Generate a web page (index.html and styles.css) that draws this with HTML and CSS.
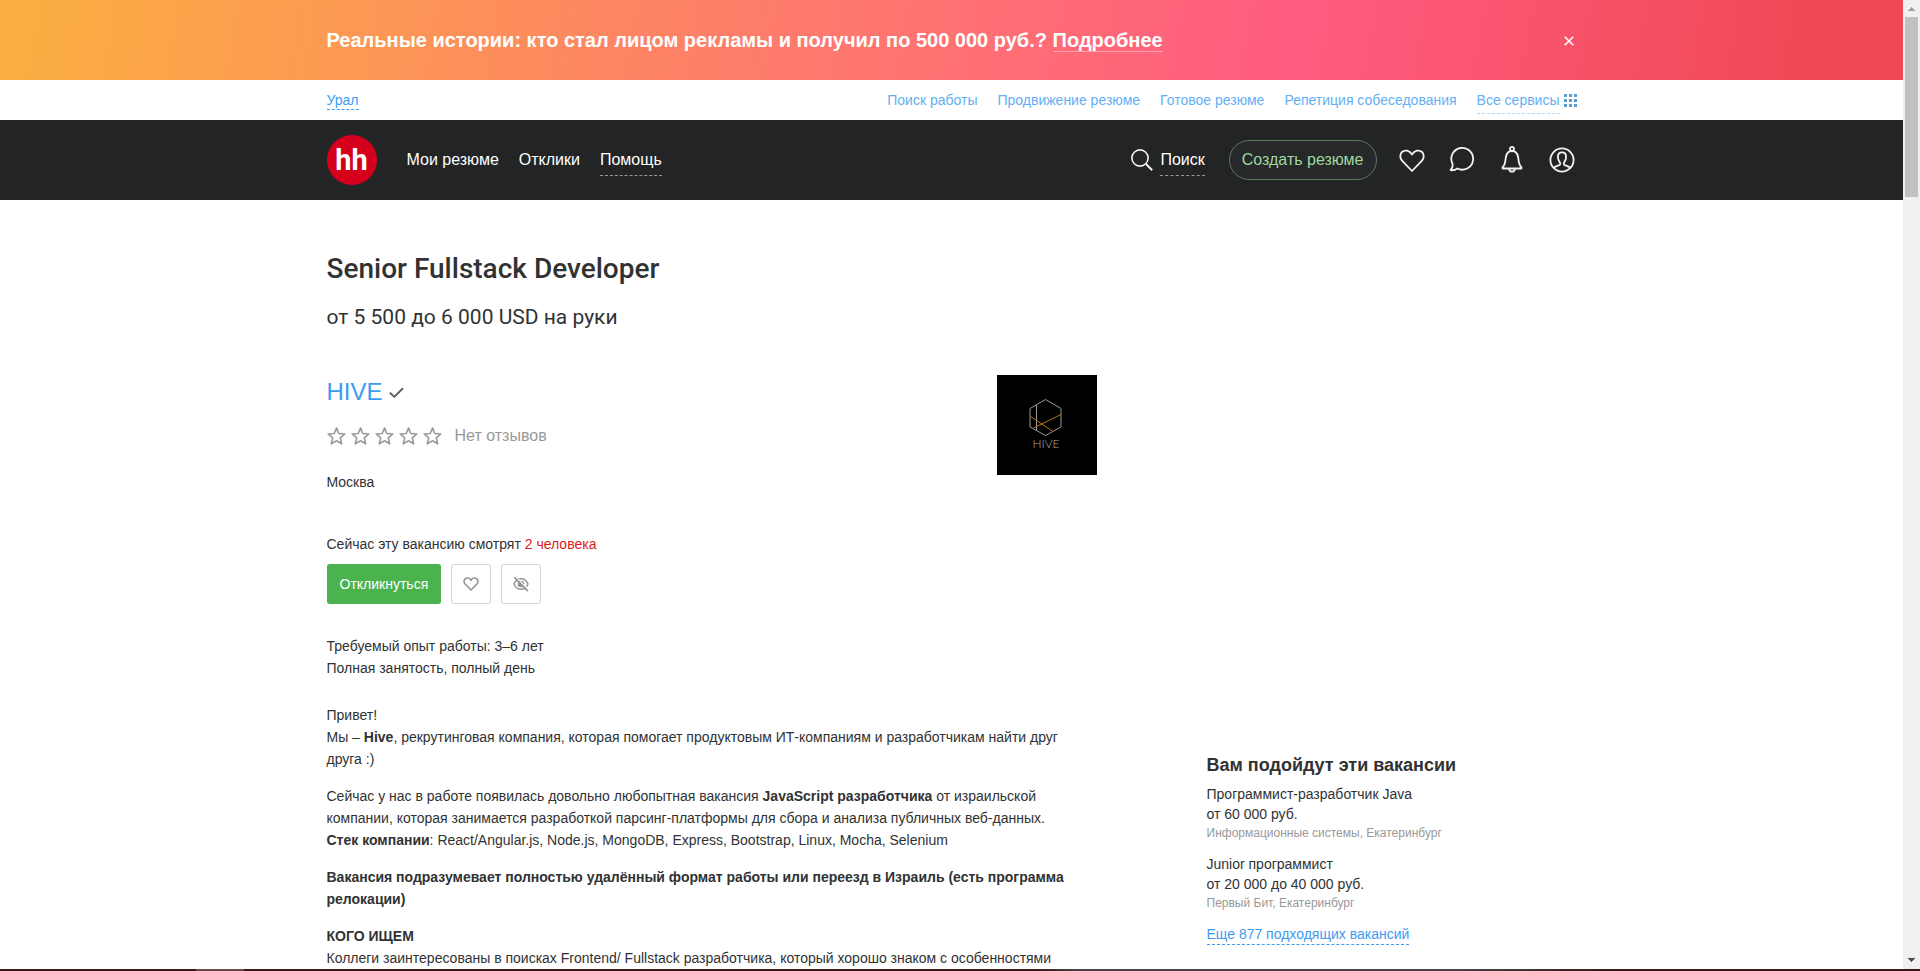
FILE: index.html
```html
<!DOCTYPE html>
<html lang="ru">
<head>
<meta charset="utf-8">
<title>Вакансия Senior Fullstack Developer</title>
<link rel="stylesheet" href="styles.css">
</head>
<body>
<div class="window">
  <div class="page">
    <div class="promo">
      <div class="container promo-row">
        <p class="promo-text">Реальные истории: кто стал лицом рекламы и получил по 500 000 руб.? <a class="promo-link" href="#">Подробнее</a></p>
        <button class="icon-button promo-close" type="button" aria-label="Закрыть">
          <svg width="10" height="10" viewBox="0 0 10 10" fill="none" stroke="#fff" stroke-width="1.6"><path d="M.7.7l8.6 8.6M9.3.7L.7 9.3"/></svg>
        </button>
      </div>
    </div>

    <div class="container services">
      <a class="region" href="#">Урал</a>
      <nav class="service-links">
        <a href="#">Поиск работы</a>
        <a href="#">Продвижение резюме</a>
        <a href="#">Готовое резюме</a>
        <a href="#">Репетиция собеседования</a>
        <span class="all-services"><a class="all-link" href="#">Все сервисы</a>
          <svg width="13" height="13" viewBox="0 0 13 13" fill="#5a9fd4"><path d="M0 0h3v3H0zM5 0h3v3H5zM10 0h3v3h-3zM0 5h3v3H0zM5 5h3v3H5zM10 5h3v3h-3zM0 10h3v3H0zM5 10h3v3H5zM10 10h3v3h-3z"/></svg>
        </span>
      </nav>
    </div>

    <header class="header">
      <div class="container header-row">
        <a class="logo" href="#">hh</a>
        <nav class="menu">
          <a href="#">Мои резюме</a>
          <a href="#">Отклики</a>
          <a class="menu-drop" href="#">Помощь</a>
        </nav>
        <div class="tools">
          <span class="search">
            <svg width="22" height="22" viewBox="0 0 22 22" fill="none" stroke="#f1f1f1" stroke-width="1.6"><circle cx="9" cy="9" r="8.1"/><path d="M14.8 14.8l6.4 6.4" stroke-width="2"/></svg>
            <a class="menu-drop" href="#">Поиск</a>
          </span>
          <button class="create" type="button">Создать резюме</button>
          <div class="user-icons">
            <button class="icon-button" type="button" aria-label="Избранное"><svg width="26" height="28" viewBox="0 0 26 28" fill="none" stroke="#f1f1f1" stroke-width="1.8" stroke-linejoin="round"><path d="M13 25L3 14.600C.6 12 .8 8 3 6 5.700 3.500 10.500 4.200 13 8.500 15.500 4.200 20.300 3.500 23 6c2.200 2 2.400 6 0 8.600z"/></svg></button>
            <button class="icon-button" type="button" aria-label="Сообщения"><svg width="26" height="28" viewBox="0 0 26 28" fill="none" stroke="#f1f1f1" stroke-width="1.800" stroke-linejoin="round"><path d="M3.400 17.500A10.900 10.900 0 1 1 8.300 22.500C6.700 23.900 4.300 24.400 1.600 24.200 3.400 22.300 4 19.900 3.400 17.500z"/></svg></button>
            <button class="icon-button" type="button" aria-label="Уведомления"><svg width="26" height="28" viewBox="0 0 26 28" fill="none" stroke="#f1f1f1" stroke-width="1.800" stroke-linejoin="round"><circle cx="13" cy="2.900" r="2"/><path d="M3.600 22.500v-1.300C6.400 19 6.200 15 6.900 11 7.600 7 10 5 13 5s5.400 2 6.100 6c.7 4 .5 8 3.300 10.200v1.300H3.600zM10 22.800c.5 3.800 5.500 3.800 6 0"/></svg></button>
            <button class="icon-button" type="button" aria-label="Профиль"><svg width="26" height="28" viewBox="0 0 26 28" fill="none" stroke="#f1f1f1" stroke-width="1.800" stroke-linejoin="round"><circle cx="13" cy="14" r="11.600"/><path d="M4.400 21.800C6 20.300 8.800 19.900 10.500 19c1-.6.8-1.900.3-2.700C9.600 14.900 8.900 13 8.900 10.800 8.900 8 10.500 6.400 13 6.400s4.100 1.600 4.100 4.400c0 2.200-.7 4.100-1.900 5.500-.5.800-.7 2.100.3 2.700 1.700.9 4.500 1.300 6.100 2.800"/></svg></button>
          </div>
        </div>
      </div>
    </header>

    <main class="container content">
      <article class="vacancy">
        <h1 class="title">Senior Fullstack Developer</h1>
        <p class="salary">от 5 500 до 6 000 USD на руки</p>

        <div class="company">
          <div class="company-info">
            <p class="company-name"><a href="#">HIVE</a>
              <svg width="15" height="12" viewBox="0 0 15 12" fill="none" stroke="#666" stroke-width="2"><path d="M.8 6.800l4.600 4L14 2.200"/></svg>
            </p>
            <div class="rating">
              <svg width="115" height="18" viewBox="0 0 115 18" fill="none" stroke="#999" stroke-width="1.600" stroke-linejoin="round">
                <defs><path id="star" d="M9.500 1l2.300 5.500 6 .5-4.500 3.900 1.400 5.900-5.200-3.100-5.200 3.100 1.400-5.900L1.200 7l6-.5z"/></defs>
                <use href="#star"/><use href="#star" x="24"/><use href="#star" x="48"/><use href="#star" x="72"/><use href="#star" x="96"/>
              </svg>
              <span>Нет отзывов</span>
            </div>
            <p class="city">Москва</p>
          </div>
          <a class="company-logo" href="#" aria-label="HIVE">
            <svg width="100" height="100" viewBox="0 0 100 100" fill="none" stroke-width="1"><rect width="100" height="100" fill="#000"/><path d="M48.500 24.500L64 33.500V52L48.500 60.500 33 52V33.500zM39.500 30v26" stroke="#999"/><path d="M33.500 41.500L56 56.500M36.500 53L64 39.500" stroke="#b5751c"/><text x="49" y="73" text-anchor="middle" class="logo-caption">HIVE</text></svg>
          </a>
        </div>

        <p class="viewers">Сейчас эту вакансию смотрят <span class="count">2 человека</span></p>
        <div class="actions">
          <button class="apply" type="button">Откликнуться</button>
          <button class="square" type="button" aria-label="В избранное"><svg width="16" height="16" viewBox="0 0 16 16" fill="none" stroke="#949494" stroke-width="1.600" stroke-linejoin="round"><path d="M8 14L2.100 8C.6 6.300.8 4 2.100 2.900 3.900 1.300 6.700 1.700 8 4.300 9.300 1.700 12.100 1.300 13.900 2.900 15.200 4 15.400 6.300 13.900 8z"/></svg></button>
          <button class="square" type="button" aria-label="Скрыть"><svg width="16" height="16" viewBox="0 0 16 16" fill="none" stroke="#949494" stroke-width="1.400"><path d="M1 8C2.500 4.300 5 2.700 8 2.700S13.500 4.300 15 8c-1.500 3.700-4 5.300-7 5.300S2.500 11.700 1 8z"/><circle cx="8" cy="8" r="2.600"/><circle cx="7.500" cy="8.500" r="1.500" fill="#949494"/><path d="M2.300.4l13 13.400" stroke="#fff" stroke-width="1.400"/><path d="M1.300 1.200l13.600 13.900" stroke-width="1.700"/></svg></button>
        </div>

        <div class="terms">
          <p>Требуемый опыт работы: 3–6 лет</p>
          <p>Полная занятость, полный день</p>
        </div>

        <div class="description">
          <p>Привет!<br>Мы – <strong>Hive</strong>, рекрутинговая компания, которая помогает продуктовым ИТ-компаниям и разработчикам найти друг друга :)</p>
          <p>Сейчас у нас в работе появилась довольно любопытная вакансия <strong>JavaScript разработчика</strong> от израильской компании, которая занимается разработкой парсинг-платформы для сбора и анализа публичных веб-данных.<br><strong>Стек компании</strong>: React/Angular.js, Node.js, MongoDB, Express, Bootstrap, Linux, Mocha, Selenium</p>
          <p><strong>Вакансия подразумевает полностью удалённый формат работы или переезд в Израиль (есть программа релокации)</strong></p>
          <p><strong>КОГО ИЩЕМ</strong><br>Коллеги заинтересованы в поисках Frontend/ Fullstack разработчика, который хорошо знаком с особенностями</p>
        </div>
      </article>

      <aside class="similar">
        <h2 class="similar-title">Вам подойдут эти вакансии</h2>
        <div class="similar-item">
          <p>Программист-разработчик Java</p>
          <p>от 60 000 руб.</p>
          <p class="employer">Информационные системы, Екатеринбург</p>
        </div>
        <div class="similar-item">
          <p>Junior программист</p>
          <p>от 20 000 до 40 000 руб.</p>
          <p class="employer">Первый Бит, Екатеринбург</p>
        </div>
        <a class="more" href="#">Еще 877 подходящих вакансий</a>
      </aside>
    </main>
  </div>

  <div class="scrollbar" aria-hidden="true">
    <svg class="arrow" width="7" height="4" viewBox="0 0 7 4" fill="#a3a3a3"><path d="M3 0h1v1h1v1h1v1h1v1H0V3h1V2h1V1h1z"/></svg>
    <div class="thumb"></div>
    <svg class="arrow arrow-down" width="7" height="4" viewBox="0 0 7 4" fill="#505050"><path d="M0 0h7v1H6v1H5v1H4v1H3V3H2V2H1V1H0z"/></svg>
  </div>
</div>
<div class="taskbar"></div>
</body>
</html>
```
FILE: styles.css
```css
* { box-sizing: border-box; }

body {
  margin: 0;
  height: 100vh;
  display: flex;
  flex-direction: column;
  overflow: hidden;
  background: #fff;
  color: #303233;
  font: 14px/22px "Liberation Sans", Arial, sans-serif;
}

p, h1, h2 { margin: 0; }
a { color: #3d9bf1; text-decoration: none; }
svg { display: block; flex: none; }
button { font: inherit; cursor: pointer; }

.window { flex: 1; min-height: 0; display: flex; }
.page { flex: 1; min-width: 0; overflow: hidden; }
.container { max-width: 1250px; margin: 0 auto; }

.icon-button { padding: 0; border: 0; background: none; }

/* Promo banner */
.promo { background: linear-gradient(100deg, #fbb040 0%, #fe7a6c 42%, #ff5c80 68%, #ef4853 96%); }
.promo-row {
  display: flex;
  align-items: center;
  justify-content: space-between;
  height: 80px;
  padding-right: 3px;
}
.promo-text { color: #fff; font-size: 20px; font-weight: bold; line-height: 24px; }
.promo-link { color: #fff; border-bottom: 1px solid #ffa3b0; }
.promo-close { padding-top: 2px; }

/* Region and service links */
.services { display: flex; justify-content: space-between; align-items: center; height: 40px; }
.region { line-height: 18px; border-bottom: 1px dashed #3d9bf1; }
.service-links { display: flex; gap: 20px; }
.service-links a { color: #64aff4; }
.all-services { display: flex; align-items: center; gap: 4px; height: 22px; }
.all-services .all-link { padding: 2px 0; border-bottom: 1px dashed #b1d7f9; }

/* Main header */
.header { background: #232425; }
.header-row { display: flex; align-items: center; height: 80px; font-size: 16px; line-height: 20px; }
.logo {
  display: flex;
  align-items: center;
  justify-content: center;
  width: 50px;
  height: 50px;
  margin-right: 30px;
  border-radius: 50%;
  background: #d6001c;
  color: #fff;
  font: 700 29px/50px Roboto, sans-serif;
}
.menu { display: flex; gap: 20px; }
.header-row .menu a, .search a { color: #fff; }
.menu-drop { padding: 5px 0; margin: -5px 0 -6px; border-bottom: 1px dashed #999; }
.tools { display: flex; align-items: center; margin-left: auto; }
.search { display: flex; align-items: center; gap: 7px; margin-right: 24px; }
.create {
  height: 40px;
  padding: 0 12px;
  border: 1px solid #5b7c5d;
  border-radius: 20px;
  background: #262829;
  color: #9ed99f;
}
.user-icons { display: flex; gap: 24px; margin: 0 2px 0 22px; }

/* Vacancy */
.content { display: grid; grid-template-columns: minmax(0, 770fr) minmax(0, 370fr); gap: 110px; padding-top: 51px; }
.title { font: 500 28px/36px Roboto, sans-serif; }
.salary { margin-top: 16px; font: 21px/28px Roboto, sans-serif; }
.company { display: flex; justify-content: space-between; align-items: flex-start; margin-top: 44px; }
.company-name { display: flex; align-items: center; gap: 6px; font-size: 24px; line-height: 34px; }
.rating { display: flex; align-items: center; gap: 13px; margin-top: 17px; color: #999; font-size: 16px; line-height: 20px; }
.city { margin-top: 25px; }
.company-logo { display: block; }
.logo-caption { fill: #aaa; font: 300 12px Lato, sans-serif; }
.viewers { margin-top: 40px; }
.count { color: #dc1c20; }
.actions { display: flex; gap: 10px; margin-top: 9px; }
.apply { height: 40px; padding: 0 13px; border: 0; border-radius: 3px; background: #4bb34e; color: #fff; }
.square {
  display: flex;
  align-items: center;
  justify-content: center;
  width: 40px;
  height: 40px;
  padding: 0;
  border: 1px solid #d5d6d7;
  border-radius: 3px;
  background: #fff;
}
.terms { margin-top: 31px; }
.description { margin-top: 25px; padding-right: 20px; }
.description p + p { margin-top: 15px; }

/* Similar vacancies */
.similar { margin-top: 502px; line-height: 20px; }
.similar-title { margin-bottom: 7px; font-size: 18px; line-height: 24px; }
.similar-item { margin-bottom: 12px; }
.employer { color: #999; font-size: 12px; line-height: 18px; }
.more { display: inline-block; line-height: 19px; border-bottom: 1px dashed #3d9bf1; }

/* Window frame */
.scrollbar {
  display: flex;
  flex-direction: column;
  align-items: center;
  width: 17px;
  padding: 7px 0;
  background: #f0f0f0;
}
.thumb { width: 13px; height: 180px; margin-top: 6px; background: #c1c1c1; }
.arrow-down { margin-top: auto; }
.taskbar { height: 2px; background: linear-gradient(90deg, #3b191b 0 196px, #6b484b 196px 244px, #3b191b 244px 54%, #444 56% 76%, #3b191b 84%); }
```
